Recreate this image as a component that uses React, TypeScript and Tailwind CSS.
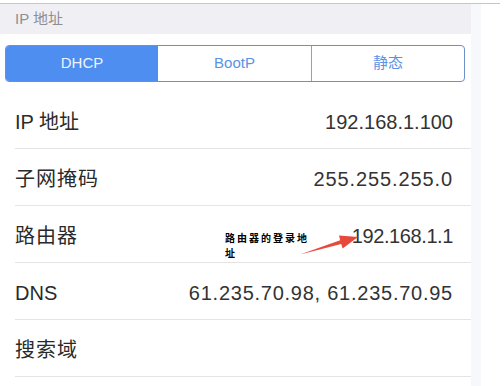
import React from "react";

const rows: { label: string; value: string; track?: string; cjk?: boolean }[] = [
  { label: "IP 地址", value: "192.168.1.100" },
  { label: "子网掩码", value: "255.255.255.0", track: "tracking-[0.9px]", cjk: true },
  { label: "路由器", value: "192.168.1.1", track: "tracking-[-0.4px]", cjk: true },
  { label: "DNS", value: "61.235.70.98, 61.235.70.95", track: "tracking-[0.75px]" },
  { label: "搜索域", value: "", cjk: true },
];

export default function App() {
  return (
    <div
      className="relative w-[504px] h-[386px] overflow-hidden bg-white"
      style={{ fontFamily: '"Liberation Sans", "Noto Sans CJK SC", sans-serif' }}
    >
      <div className="mt-[3px] h-px w-[500px] bg-[#c6c6ca]" />
      <div className="flex">
        <div className="w-[471px] shrink-0">
          <div className="flex h-[30px] items-center bg-[#f0f0f4] pl-[15px] text-[15px] text-[#8e8e93]">
            IP 地址
          </div>
          <div className="pl-[5px] pt-[11px]">
            <div className="flex h-[37px] w-[460px] overflow-hidden rounded-[4px] border border-[#6f90c4] text-[15px]">
              <div className="flex w-[152px] items-center justify-center bg-[#4d8ef0] text-[#eef4ff]">
                DHCP
              </div>
              <div className="flex w-[154px] items-center justify-center border-r border-[#8aa2c4] text-[#5a93e6]">
                BootP
              </div>
              <div className="flex flex-1 items-center justify-center text-[#5a93e6]">静态</div>
            </div>
          </div>
          <div className="mt-[10px]">
            {rows.map((r) => (
              <div
                key={r.label}
                className="ml-[15px] flex h-[57px] items-center justify-between border-b border-[#e4e4e7] pr-[18px] pt-[4px] text-[20px] text-[#2a2a2a]"
              >
                <span className={r.cjk ? "tracking-[1px]" : ""}>{r.label}</span>
                <span className={`text-[#333] ${r.track ?? ""}`}>{r.value}</span>
              </div>
            ))}
          </div>
        </div>
        <div className="h-[386px] w-[10px] bg-[#f6f8fc]" />
      </div>

      <div
        className="absolute left-[225px] top-[230px] text-[10px] font-bold leading-[15px] tracking-[2px] text-black"
        style={{ fontFamily: '"Noto Sans CJK SC", sans-serif' }}
      >
        路由器的登录地
        <br />
        址
      </div>
      <svg className="absolute left-0 top-0" width="504" height="386" viewBox="0 0 504 386">
        <path d="M300 254.5 L340.2 240.3 L339 235.6 L358 237 L342.6 248.4 L341.2 243.9 Z" fill="#e8473c" />
      </svg>
    </div>
  );
}
